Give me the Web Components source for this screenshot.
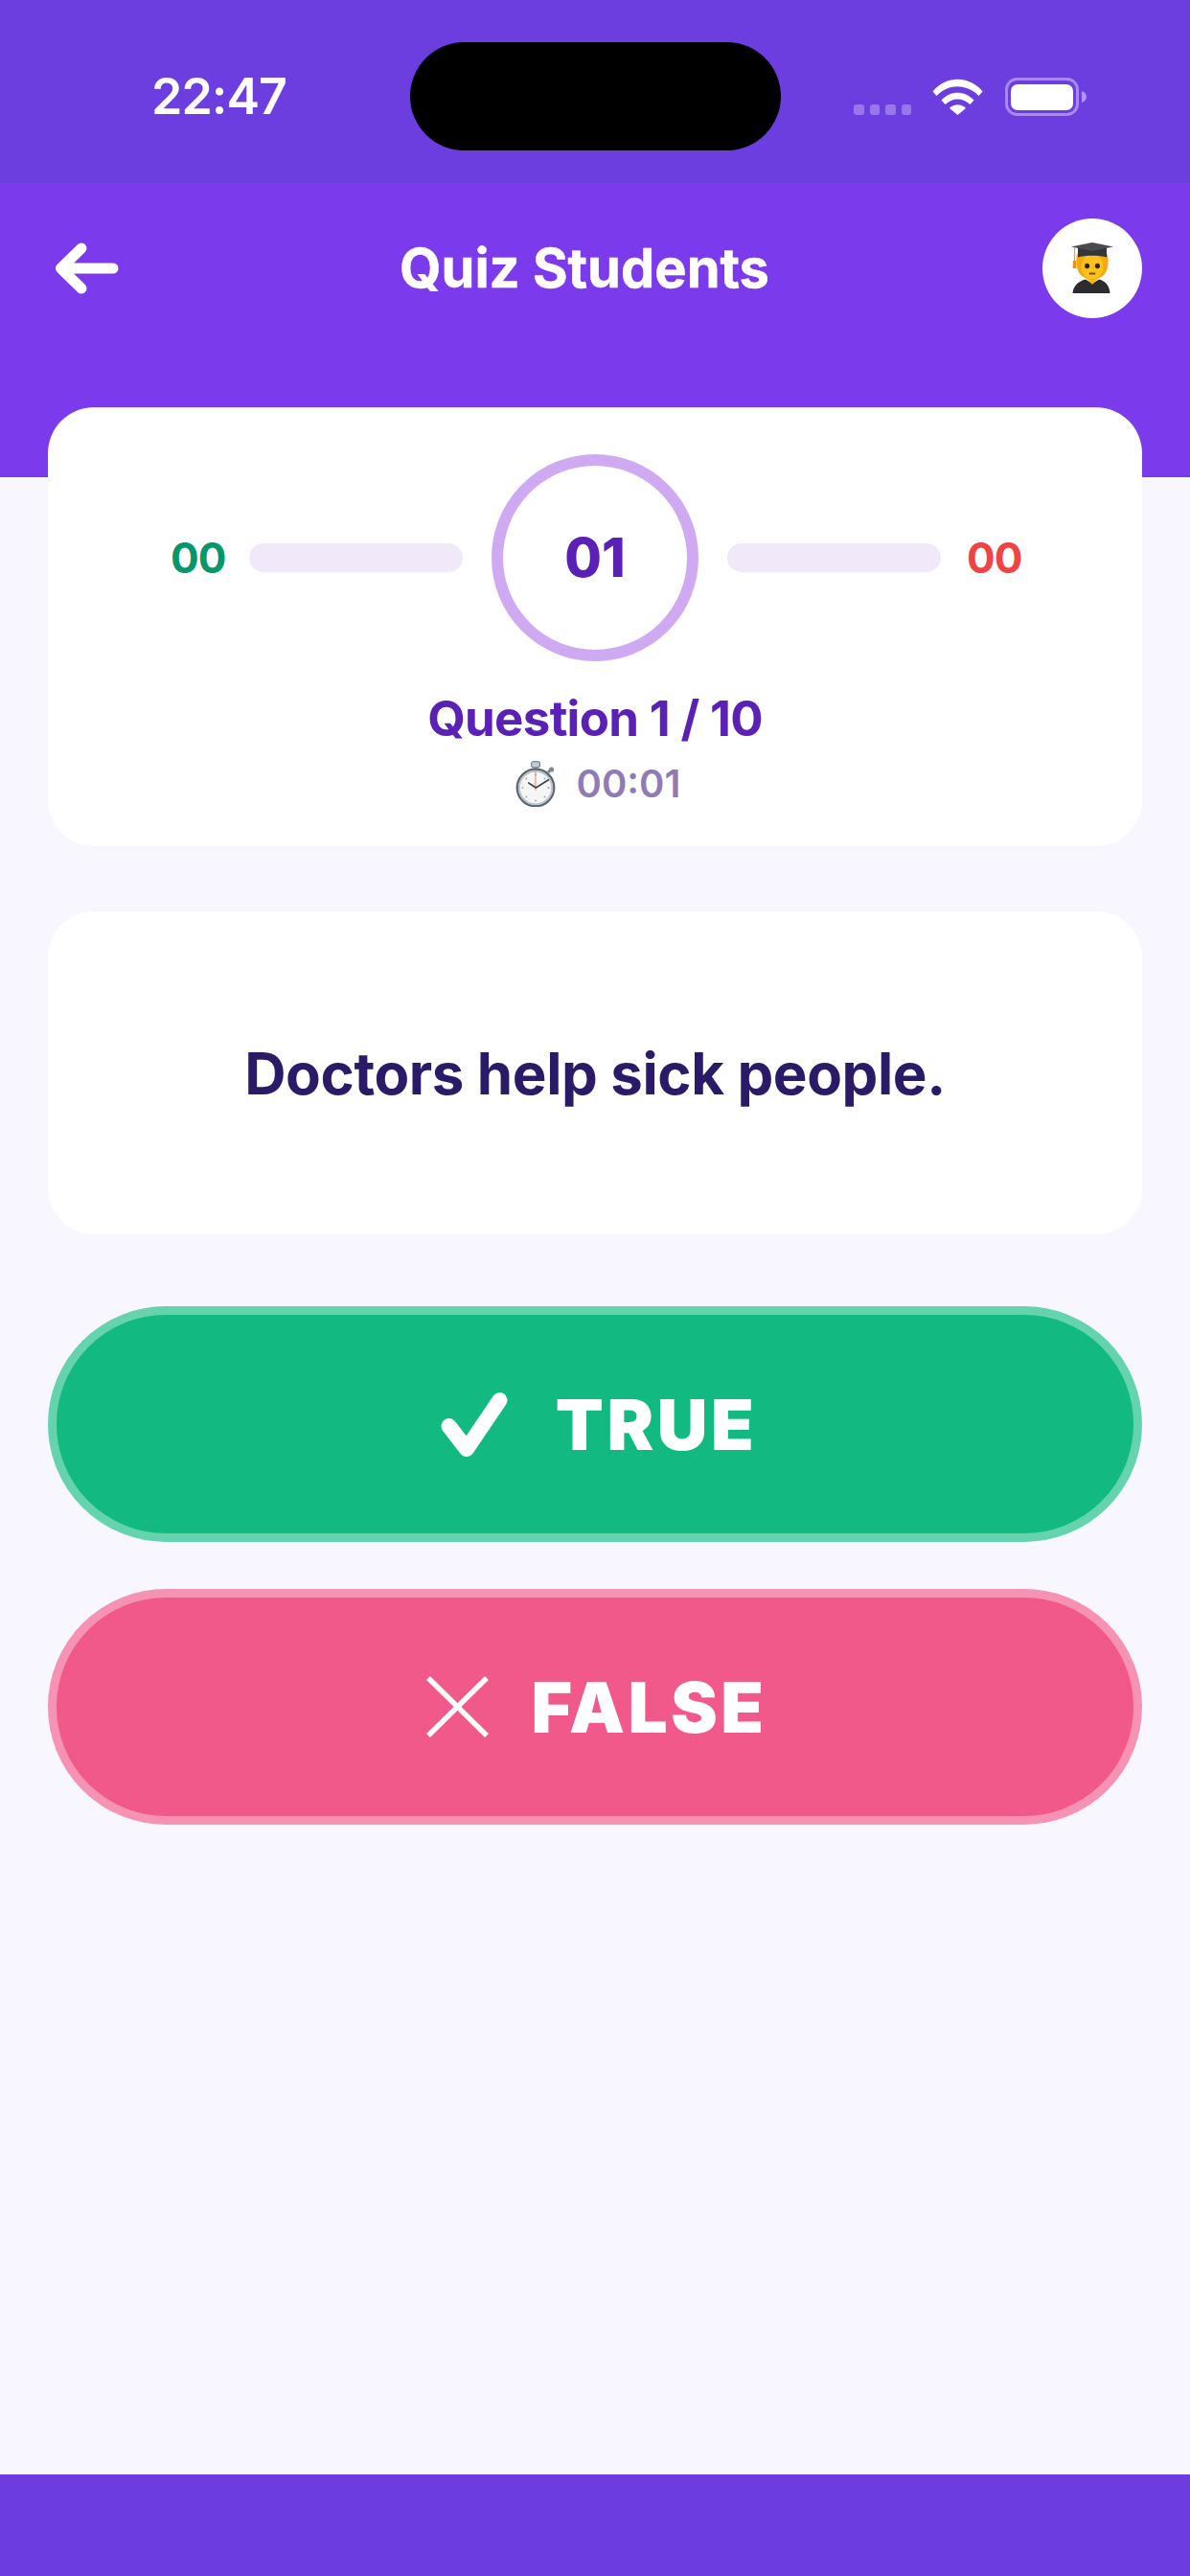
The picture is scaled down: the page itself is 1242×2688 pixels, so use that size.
<!DOCTYPE html>
<html>
<head>
<meta charset="utf-8">
<title>Quiz Students</title>
<style>
  html, body { margin: 0; padding: 0; }
  body {
    width: 1242px;
    height: 2688px;
    overflow: hidden;
    display: flex;
    flex-direction: column;
    background: #f8f7ff;
    font-family: Inter, "Liberation Sans", sans-serif;
  }
</style>
</head>
<body>
  <status-bar time="22:47"></status-bar>
  <app-header title="Quiz Students"></app-header>
  <quiz-body>
    <score-card correct="00" wrong="00" current="01" question="Question 1 / 10" timer="00:01"></score-card>
    <question-card>Doctors help sick people.</question-card>
    <answer-button kind="true">TRUE</answer-button>
    <answer-button kind="false">FALSE</answer-button>
  </quiz-body>
  <app-footer></app-footer>

<script>
  class StatusBar extends HTMLElement {
    connectedCallback() {
      this.attachShadow({mode: 'open'});
      this.shadowRoot.innerHTML = `
        <style>
          :host {
            display: grid;
            grid-template-columns: 428px 387px 1fr;
            align-items: center;
            height: 191px;
            box-sizing: border-box;
            padding-bottom: 34px;
            padding-top: 43px;
            background: #6c3ee0;
            color: #fff;
          }
          .time {
            padding-left: 158px;
            padding-top: 2px;
            font-size: 52px;
            font-weight: 600;
            letter-spacing: -1px;
            line-height: 1;
          }
          .island { height: 113px; border-radius: 56.5px; background: #000; }
          .icons { display: flex; align-items: flex-end; padding-left: 76px; }
          .dots { display: flex; gap: 6px; margin-right: 22px; }
          .dots i { width: 10.5px; height: 10.5px; border-radius: 3px; background: rgba(255,255,255,.3); }
          svg { display: block; }
        </style>
        <div class="time">${this.getAttribute('time')}</div>
        <div class="island"></div>
        <div class="icons">
          <div class="dots"><i></i><i></i><i></i><i></i></div>
          <svg width="53" height="38" viewBox="0 0 53 38" style="margin-right:23px">
            <path d="M0.5 13.5 C14 -3.5 39 -3.5 52.5 13.5 L48.5 18 C36 5 17 5 4.5 18 Z" fill="#fff"/>
            <path d="M9.5 22.5 C19 12 34 12 43.5 22.5 L39.5 27 C32 19.5 21 19.5 13.5 27 Z" fill="#fff"/>
            <path d="M18 31 C23 26 30 26 35 31 L26.5 38 Z" fill="#fff"/>
          </svg>
          <svg width="86" height="40" viewBox="0 0 86 40" style="margin-bottom:-1px">
            <rect x="1.5" y="1.5" width="74" height="37" rx="11" fill="none" stroke="#fff" stroke-opacity=".4" stroke-width="3"/>
            <rect x="6" y="7" width="65" height="27" rx="7" fill="#fff"/>
            <path d="M80 14 C83 15 85 17 85 20 C85 23 83 25 80 26 Z" fill="#fff" fill-opacity=".45"/>
          </svg>
        </div>
      `;
    }
  }

  class AppHeader extends HTMLElement {
    connectedCallback() {
      this.attachShadow({mode: 'open'});
      this.shadowRoot.innerHTML = `
        <style>
          :host {
            display: flex;
            align-items: flex-start;
            justify-content: space-between;
            height: 307px;
            box-sizing: border-box;
            padding: 37px 50px 0;
            background: #7c3aed;
            color: #fff;
          }
          .back { width: 82px; height: 104px; display: flex; align-items: center; }
          svg { display: block; }
          .title {
            height: 104px;
            line-height: 104px;
            font-size: 56px;
            font-weight: 700;
            -webkit-text-stroke: .5px #fff;
          }
          .avatar {
            width: 104px;
            height: 104px;
            border-radius: 50%;
            background: #fff;
            display: flex;
            align-items: center;
            justify-content: center;
          }
        </style>
        <div class="back">
          <svg width="82" height="60" viewBox="0 0 82 60">
            <path d="M35 9 L13.5 30 L35 51 M13.5 30 H68" fill="none" stroke="#fff" stroke-width="11" stroke-linecap="round" stroke-linejoin="round"/>
          </svg>
        </div>
        <div class="title">${this.getAttribute('title')}</div>
        <div class="avatar">
          <svg width="44" height="54" viewBox="0 0 44 54">
            <path d="M1.5 53 C2 45 8 40.5 15 38.5 L22 43 L29 38.5 C36 40.5 40 45 40.5 53 Z" fill="#2c2b2e"/>
            <path d="M6 12 H38 C39.5 21 38.5 30 33 35 L22 41 L11 35 C5.5 30 4.5 21 6 12 Z" fill="#f5a80f"/>
            <path d="M15 36 L22 44 L29 36 Z" fill="#f5b50f"/>
            <ellipse cx="22" cy="25" rx="11.5" ry="13" fill="#fcc21b"/>
            <ellipse cx="16.6" cy="24.5" rx="2.5" ry="2.8" fill="#2a2118"/>
            <ellipse cx="27.4" cy="24.5" rx="2.5" ry="2.8" fill="#2a2118"/>
            <path d="M19.5 32.5 H24.5" stroke="#7a4a12" stroke-width="1.8" stroke-linecap="round"/>
            <path d="M7 6 V15.5 C14 13 30 13 37 15.5 V6 Z" fill="#35363b"/>
            <path d="M0 4.5 L22 0 L44 4.5 L22 9 Z" fill="#4a4b51"/>
            <path d="M3.5 5 V20" stroke="#e8a02a" stroke-width="1.2"/>
            <path d="M2 19 H5 L5.4 27 H1.6 Z" fill="#e8941c"/>
          </svg>
        </div>
      `;
    }
  }

  class QuizBody extends HTMLElement {
    connectedCallback() {
      this.attachShadow({mode: 'open'});
      this.shadowRoot.innerHTML = `
        <style>
          :host {
            display: flex;
            flex-direction: column;
            flex: 1;
            padding: 0 50px;
            margin-top: -73px;
          }
        </style>
        <slot></slot>
      `;
    }
  }

  class ScoreCard extends HTMLElement {
    connectedCallback() {
      const attr = name => this.getAttribute(name);
      this.attachShadow({mode: 'open'});
      this.shadowRoot.innerHTML = `
        <style>
          :host {
            display: flex;
            flex-direction: column;
            align-items: center;
            height: 458px;
            box-sizing: border-box;
            padding-top: 49px;
            background: #fff;
            border-radius: 48px;
          }
          .row { display: flex; align-items: center; height: 216px; }
          .score { width: 54px; font-size: 44px; font-weight: 700; letter-spacing: -1px; text-align: center; line-height: 1; }
          .ok { color: #059669; margin-right: 27px; position: relative; left: -1px; }
          .bad { color: #ef4444; margin-left: 27px; }
          .track { width: 223px; height: 30px; border-radius: 15px; background: #f1e8f9; }
          .ring {
            width: 216px;
            height: 216px;
            box-sizing: border-box;
            margin: 0 30px;
            border: 12px solid #cfaaf3;
            border-radius: 50%;
            display: flex;
            align-items: center;
            justify-content: center;
            color: #5b21b6;
            font-size: 56px;
            font-weight: 800;
          }
          .question {
            margin-top: 30px;
            color: #5b21b6;
            font-size: 51px;
            font-weight: 700;
            letter-spacing: -.7px;
            line-height: 60px;
          }
          .timer {
            display: flex;
            align-items: center;
            gap: 21px;
            margin-top: 14px;
            margin-left: 5px;
            color: #8f7cb5;
            font-size: 40px;
            font-weight: 600;
            line-height: 48px;
          }
          svg { display: block; }
        </style>
        <div class="row">
          <div class="score ok">${attr('correct')}</div>
          <div class="track"></div>
          <div class="ring">${attr('current')}</div>
          <div class="track"></div>
          <div class="score bad">${attr('wrong')}</div>
        </div>
        <div class="question">${attr('question')}</div>
        <div class="timer">
          <svg width="44" height="48" viewBox="0 0 44 48">
            <rect x="17.5" y="0.7" width="9" height="6" rx="2.5" fill="#c3ccd3" stroke="#7b858d" stroke-width="1.2"/>
            <rect x="19.5" y="6" width="5" height="3" fill="#8d969e"/>
            <path d="M35 12 L38 9" stroke="#7d8891" stroke-width="3"/>
            <circle cx="38.5" cy="9" r="2.6" fill="#7d8891"/>
            <circle cx="22" cy="28" r="19.2" fill="#f6f6f6" stroke="#5f666c" stroke-width="2.4"/>
            <circle cx="22" cy="28" r="17.2" fill="none" stroke="#b7c6d2" stroke-width="2"/>
            <g fill="#a8a8a8">
              <circle cx="22" cy="14.5" r="1"/><circle cx="22" cy="41.5" r="1"/><circle cx="8.5" cy="28" r="1"/><circle cx="35.5" cy="28" r="1"/>
              <circle cx="12.4" cy="18.4" r="1"/><circle cx="31.6" cy="18.4" r="1"/><circle cx="12.4" cy="37.6" r="1"/><circle cx="31.6" cy="37.6" r="1"/>
            </g>
            <path d="M22 11 V31" stroke="#ef8a62" stroke-width="1"/>
            <path d="M22.3 28 L35.5 19.7 M22.3 28 L14.7 23" stroke="#3f4449" stroke-width="1.6" stroke-linecap="round"/>
          </svg>
          <span>${attr('timer')}</span>
        </div>
      `;
    }
  }

  class QuestionCard extends HTMLElement {
    connectedCallback() {
      this.attachShadow({mode: 'open'});
      this.shadowRoot.innerHTML = `
        <style>
          :host {
            display: flex;
            align-items: center;
            justify-content: center;
            height: 337px;
            margin: 68px 0 75px;
            background: #fff;
            border-radius: 48px;
            color: #2a1a68;
            font-size: 60px;
            font-weight: 700;
            letter-spacing: -.4px;
          }
        </style>
        <slot></slot>
      `;
    }
  }

  const ICONS = {
    true: `<svg width="70" height="67" viewBox="0 0 70 67" style="margin-right:50px">
        <path d="M8.5 35 L27 59 L61.5 8" fill="none" stroke="#fff" stroke-width="16" stroke-linecap="round" stroke-linejoin="round"/>
      </svg>`,
    false: `<svg width="65" height="64" viewBox="0 0 65 64" style="margin-right:44px">
        <path d="M2 2 L63 62 M63 2 L2 62" fill="none" stroke="#fff" stroke-width="5.5"/>
      </svg>`
  };

  class AnswerButton extends HTMLElement {
    connectedCallback() {
      const kind = this.getAttribute('kind');
      this.attachShadow({mode: 'open'});
      this.shadowRoot.innerHTML = `
        <style>
          :host {
            display: flex;
            align-items: center;
            justify-content: center;
            height: 246px;
            box-sizing: border-box;
            margin-bottom: 49px;
            border: 9.5px solid;
            border-radius: 123px;
            color: #fff;
            font-size: 73px;
            font-weight: 900;
            letter-spacing: 3.5px;
          }
          :host([kind="true"]) { background: #12ba82; border-color: #66d3af; padding-left: 8px; }
          :host([kind="false"]) { background: #f2598b; border-color: #f693b4; padding-left: 4px; }
          svg { display: block; flex: none; }
        </style>
        ${ICONS[kind]}
        <slot></slot>
      `;
    }
  }

  class AppFooter extends HTMLElement {
    connectedCallback() {
      this.attachShadow({mode: 'open'});
      this.shadowRoot.innerHTML = `
        <style>
          :host { display: block; height: 106px; background: #6c3ce0; }
        </style>
      `;
    }
  }

  customElements.define('status-bar', StatusBar);
  customElements.define('app-header', AppHeader);
  customElements.define('quiz-body', QuizBody);
  customElements.define('score-card', ScoreCard);
  customElements.define('question-card', QuestionCard);
  customElements.define('answer-button', AnswerButton);
  customElements.define('app-footer', AppFooter);
</script>
</body>
</html>
